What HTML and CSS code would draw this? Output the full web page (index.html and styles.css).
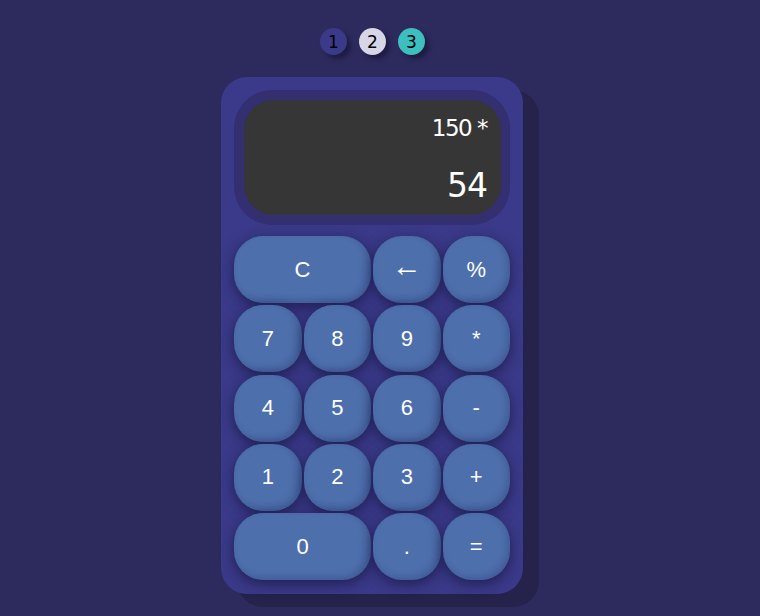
FILE: index.html
```html
<!DOCTYPE html>
<html>
<head>
<meta charset="utf-8">
<link rel="stylesheet" href="styles.css">
</head>
<body>
<div class="themes">
  <span class="dot dot-1">1</span>
  <span class="dot dot-2">2</span>
  <span class="dot dot-3">3</span>
</div>
<div class="calc">
  <div class="screen">
    <div class="display">
      <div class="prev">150 *</div>
      <div class="cur">54</div>
    </div>
  </div>
  <div class="keys">
    <button class="key wide">C</button>
    <button class="key arrow">&larr;</button>
    <button class="key">%</button>
    <button class="key">7</button>
    <button class="key">8</button>
    <button class="key">9</button>
    <button class="key">*</button>
    <button class="key">4</button>
    <button class="key">5</button>
    <button class="key">6</button>
    <button class="key">-</button>
    <button class="key">1</button>
    <button class="key">2</button>
    <button class="key">3</button>
    <button class="key">+</button>
    <button class="key wide">0</button>
    <button class="key">.</button>
    <button class="key">=</button>
  </div>
</div>
</body>
</html>
```
FILE: styles.css
```css
* { box-sizing: border-box; }
html, body { margin: 0; padding: 0; }
body {
  background: #2d2b5e;
  height: 616px;
  display: flex;
  flex-direction: column;
  align-items: center;
  font-family: "Liberation Sans", Arial, sans-serif;
  overflow: hidden;
}
.themes {
  display: flex;
  gap: 12px;
  margin-top: 28px;
  margin-left: -15px;
}
.dot {
  width: 27px;
  height: 27px;
  border-radius: 50%;
  display: flex;
  align-items: center;
  justify-content: center;
  font-family: "DejaVu Sans", sans-serif;
  font-size: 17px;
  color: #000;
  box-shadow: 4px 4px 4px rgba(20, 18, 50, 0.6);
}
.dot-1 { background: #3b3a8a; }
.dot-2 { background: #d6d6e6; }
.dot-3 { background: #3dbfbf; }
.calc {
  margin-top: 22px;
  margin-left: -16px;
  width: 302px;
  background: #3b3a8a;
  border-radius: 26px;
  padding: 13px 13px 14px;
  box-shadow: 16px 13px 0 #25234c;
}
.screen {
  background: #332f70;
  border-radius: 38px;
  padding: 10px 9px 10px 10px;
}
.display {
  background: #363636;
  border-radius: 30px;
  height: 115px;
  display: flex;
  flex-direction: column;
  align-items: flex-end;
  padding: 14px 14px 0 0;
  color: #fff;
  font-family: "DejaVu Sans", sans-serif;
}
.prev {
  font-size: 23px;
  letter-spacing: -1.5px;
  line-height: 28px;
}
.cur {
  margin-top: 25px;
  font-size: 33px;
  letter-spacing: -1px;
  line-height: 38px;
}
.keys {
  margin-top: 11px;
  display: grid;
  grid-template-columns: repeat(4, 1fr);
  grid-auto-rows: 67px;
  column-gap: 2px;
  row-gap: 2.3px;
}
.key {
  border: none;
  background: #4d6fac;
  border-radius: 29px;
  color: #fff;
  font-family: "Liberation Sans", Arial, sans-serif;
  font-size: 22px;
  box-shadow: 0 4px 14px rgba(22, 20, 60, 0.7), inset -3px -3px 6px rgba(30, 40, 90, 0.25);
  padding: 0;
}
.key.wide { grid-column: span 2; }
.key.arrow { font-size: 30px; font-family: "Liberation Serif", serif; padding-bottom: 7px; }
```
